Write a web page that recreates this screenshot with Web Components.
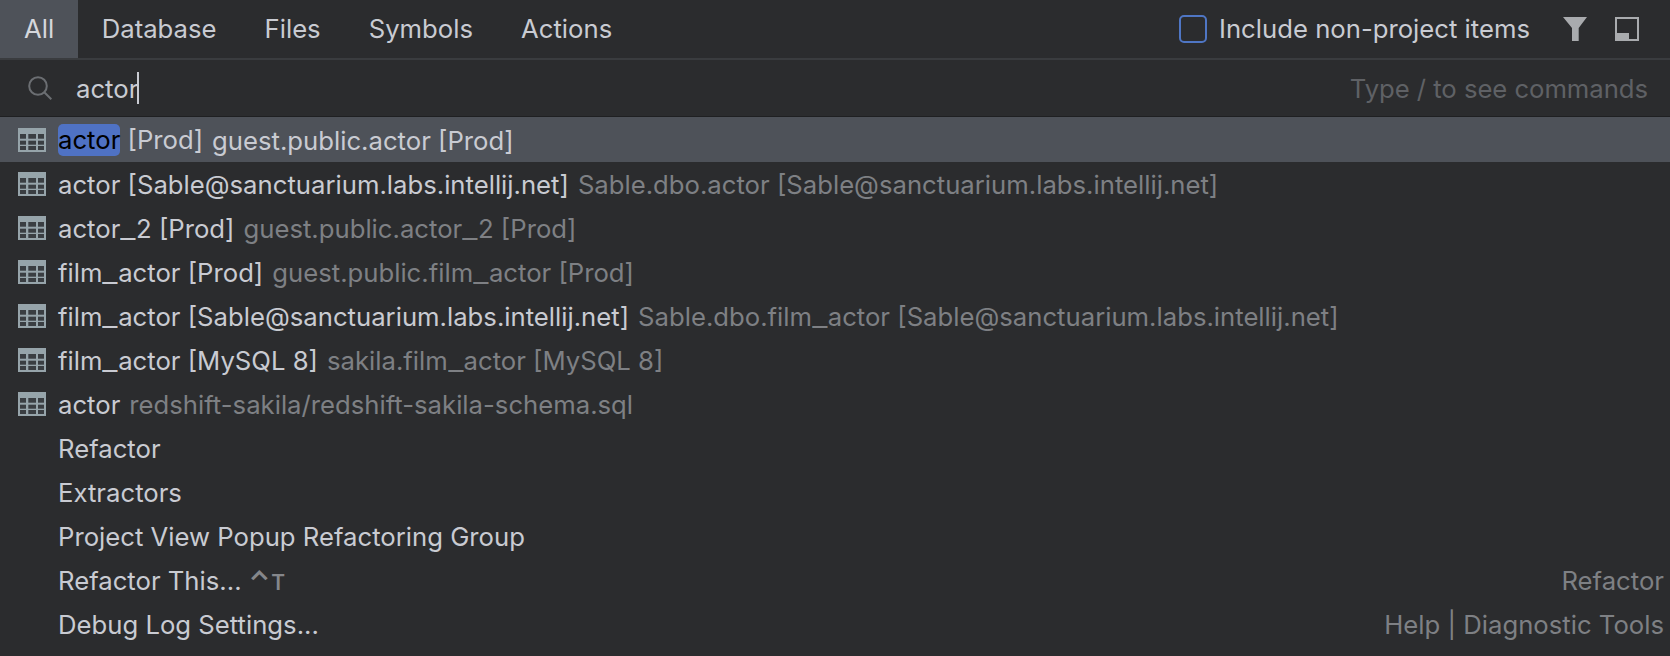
<!DOCTYPE html>
<html>
<head>
<meta charset="utf-8">
<style>
  html, body { margin: 0; height: 100%; background: #2b2c2e; overflow: hidden; }
  body { font-family: Inter, "Liberation Sans", sans-serif; font-size: 25.7px; color: #c9cbd2; }
  /* Inter's underscore is narrower than the reference font's */
  .u { display: inline-block; transform: scaleX(1.3); margin: 0 2px; }
  .keys { color: #85878b; font-weight: 700; font-size: 27px; margin-left: -2px; }
  .keys small { font-size: 21px; font-weight: 600; margin-left: 1px; }
</style>
</head>
<body>
<search-popup>
  <tab-bar slot="tabs"></tab-bar>
  <search-field slot="field" value="actor" hint="Type / to see commands"></search-field>
  <result-row selected icon><mark-text>actor</mark-text> [Prod]<span slot="path">guest.public.actor [Prod]</span></result-row>
  <result-row icon>actor [Sable@sanctuarium.labs.intellij.net]<span slot="path">Sable.dbo.actor [Sable@sanctuarium.labs.intellij.net]</span></result-row>
  <result-row icon>actor<span class="u">_</span>2 [Prod]<span slot="path">guest.public.actor<span class="u">_</span>2 [Prod]</span></result-row>
  <result-row icon>film<span class="u">_</span>actor [Prod]<span slot="path">guest.public.film<span class="u">_</span>actor [Prod]</span></result-row>
  <result-row icon>film<span class="u">_</span>actor [Sable@sanctuarium.labs.intellij.net]<span slot="path">Sable.dbo.film<span class="u">_</span>actor [Sable@sanctuarium.labs.intellij.net]</span></result-row>
  <result-row icon>film<span class="u">_</span>actor [MySQL 8]<span slot="path">sakila.film<span class="u">_</span>actor [MySQL 8]</span></result-row>
  <result-row icon>actor<span slot="path">redshift-sakila/redshift-sakila-schema.sql</span></result-row>
  <result-row>Refactor</result-row>
  <result-row>Extractors</result-row>
  <result-row>Project View Popup Refactoring Group</result-row>
  <result-row>Refactor This...<span slot="path" class="keys">⌃<small>T</small></span><span slot="right">Refactor</span></result-row>
  <result-row>Debug Log Settings...<span slot="right">Help | Diagnostic Tools</span></result-row>
</search-popup>

<script>
class SearchPopup extends HTMLElement {
  constructor() {
    super();
    this.attachShadow({ mode: 'open' });
    this.shadowRoot.innerHTML = `
      <style>
        :host { display: flex; flex-direction: column; width: 1670px; height: 656px; background: #2b2c2e; }
        .list { display: flex; flex-direction: column; }
      </style>
      <slot name="tabs"></slot>
      <slot name="field"></slot>
      <div class="list"><slot></slot></div>
    `;
  }
}

class TabBar extends HTMLElement {
  constructor() {
    super();
    this.attachShadow({ mode: 'open' });
    this.shadowRoot.innerHTML = `
      <style>
        :host { display: flex; align-items: stretch; height: 58px; border-bottom: 2px solid #3a3c3f; }
        .tab { display: flex; align-items: center; padding: 0 24px 2px; }
        .tab.on { background: #4e5259; color: #d5d7dc; padding-right: 23.5px; }
        .right { margin-left: auto; display: flex; align-items: center; }
        .right span { padding-bottom: 2px; }
        .check { width: 24px; height: 24px; border: 2px solid #4f76c4; border-radius: 5px; margin-right: 12px; }
        svg { display: block; }
        .filter { margin-left: 33px; }
        .layout { margin-left: 28px; margin-right: 31px; }
      </style>
      <div class="tab on">All</div>
      <div class="tab">Database</div>
      <div class="tab">Files</div>
      <div class="tab">Symbols</div>
      <div class="tab">Actions</div>
      <div class="right">
        <div class="check"></div>
        <span>Include non-project items</span>
        <svg class="filter" width="24" height="24" viewBox="0 0 24 24"><path d="M0 0H24L15.7 11V24H9V11Z" fill="#a9abae"/></svg>
        <svg class="layout" width="24" height="24" viewBox="0 0 24 24"><path fill-rule="evenodd" d="M0 0H24V24H0ZM2 2V16H14V22H22V2Z" fill="#a9abae"/></svg>
      </div>
    `;
  }
}

class SearchField extends HTMLElement {
  constructor() {
    super();
    this.attachShadow({ mode: 'open' });
    this.shadowRoot.innerHTML = `
      <style>
        :host { display: flex; align-items: center; height: 56px; border-bottom: 1px solid #1f2022; padding-left: 28px; padding-right: 22px; }
        svg { display: block; margin-right: 24px; }
        .caret { display: inline-block; width: 2px; height: 32px; background: #c9cbd2; margin-left: -1px; }
        .hint { margin-left: auto; color: #5f6165; letter-spacing: -0.05px; }
      </style>
      <svg width="24" height="24" viewBox="0 0 24 24" fill="none" stroke="#6b6e72" stroke-width="2"><circle cx="10" cy="10" r="8.8"/><path d="M16.3 16.3L23.3 23.3"/></svg>
      <span class="value"></span><span class="caret"></span>
      <span class="hint"></span>
    `;
    this.shadowRoot.querySelector('.value').textContent = this.getAttribute('value');
    this.shadowRoot.querySelector('.hint').textContent = this.getAttribute('hint');
  }
}

class MarkText extends HTMLElement {
  constructor() {
    super();
    this.attachShadow({ mode: 'open' });
    this.shadowRoot.innerHTML = `
      <style>
        :host { display: inline-block; background: #4f72c4; color: #000; border-radius: 5px; line-height: 32px; }
      </style>
      <slot></slot>
    `;
  }
}

class ResultRow extends HTMLElement {
  constructor() {
    super();
    this.attachShadow({ mode: 'open' });
    this.shadowRoot.innerHTML = `
      <style>
        :host { display: flex; align-items: center; height: 44px; box-sizing: border-box; padding: 1px 6px 0 58px; position: relative; white-space: nowrap; }
        :host([selected]) { background: #4e5259; height: 45px; }
        .icon { position: absolute; left: 18px; top: 10px; display: none; }
        :host([selected]) .icon { top: 11px; }
        :host([icon]) .icon { display: block; }
        .path { color: #7e8084; margin-left: 9px; }
        :host([selected]) .path { color: #c9cbd2; }
        .right { margin-left: auto; color: #7e8084; }
      </style>
      <svg class="icon" width="28" height="24" viewBox="0 0 28 24">
        <rect width="28" height="24" fill="#96a4aa"/>
        <g fill="#3a3e42">
          <rect x="2" y="6" width="6" height="4.7"/><rect x="10.3" y="6" width="7.7" height="4.7"/><rect x="20" y="6" width="6" height="4.7"/>
          <rect x="2" y="12.7" width="6" height="4"/><rect x="10.3" y="12.7" width="7.7" height="4"/><rect x="20" y="12.7" width="6" height="4"/>
          <rect x="2" y="18" width="6" height="4"/><rect x="10.3" y="18" width="7.7" height="4"/><rect x="20" y="18" width="6" height="4"/>
        </g>
      </svg>
      <span><slot></slot></span>
      <span class="path"><slot name="path"></slot></span>
      <span class="right"><slot name="right"></slot></span>
    `;
  }
}

customElements.define('search-popup', SearchPopup);
customElements.define('tab-bar', TabBar);
customElements.define('search-field', SearchField);
customElements.define('mark-text', MarkText);
customElements.define('result-row', ResultRow);
</script>
</body>
</html>
